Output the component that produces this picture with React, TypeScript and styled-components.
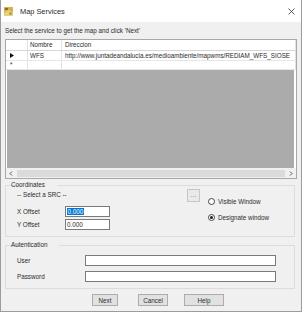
import React from 'react';
import styled, { createGlobalStyle } from 'styled-components';

const GlobalStyle = createGlobalStyle`
  html, body {
    margin: 0;
    padding: 0;
    background: #ffffff;
  }
  body {
    font-family: 'Liberation Sans', Arial, sans-serif;
    color: #2b2b2b;
  }
  * {
    box-sizing: border-box;
  }
`;

const TEXT = '6.3px';

const Window = styled.div`
  width: 302px;
  height: 312px;
  display: flex;
  flex-direction: column;
  background: #f0f0f0;
  border: 1px solid #9c9c9c;
  border-top: none;
  overflow: hidden;
`;

const TitleBar = styled.div`
  height: 22px;
  flex-shrink: 0;
  display: flex;
  align-items: center;
  background: #ffffff;
  padding: 0 6px 0 3px;
`;

const Title = styled.span`
  margin-left: 7px;
  font-size: 7.4px;
  color: #2b2b2b;
  flex: 1;
`;

const Body = styled.div`
  flex: 1;
  display: flex;
  flex-direction: column;
  padding: 0 4px;
`;

const Instruction = styled.div`
  margin-top: 4px;
  height: 10px;
  line-height: 10px;
  font-size: ${TEXT};
`;

const Grid = styled.div`
  margin-top: 3px;
  height: 140px;
  display: flex;
  flex-direction: column;
  border: 1px solid #a8a8a8;
  background: #ffffff;
`;

const GridRow = styled.div<{ $h: number; $header?: boolean }>`
  height: ${p => p.$h}px;
  flex-shrink: 0;
  display: grid;
  grid-template-columns: 22px 34px 1fr;
  border-bottom: 1px solid ${p => (p.$header ? '#d6d6d6' : '#e6e6e6')};
  font-size: ${TEXT};
  line-height: ${p => p.$h - 1}px;
`;

const Cell = styled.div<{ $pad?: number }>`
  border-right: 1px solid #e2e2e2;
  padding-left: ${p => p.$pad ?? 2}px;
  white-space: nowrap;
  overflow: hidden;
  display: flex;
  align-items: center;
`;

const Empty = styled.div`
  flex: 1;
  background: #ababab;
  margin: 0 2px 0 1px;
`;

const ScrollBar = styled.div`
  height: 10px;
  flex-shrink: 0;
  display: flex;
  align-items: center;
  background: #f0f0f0;
`;

const ScrollArrow = styled.div`
  width: 10px;
  height: 10px;
  display: flex;
  align-items: center;
  justify-content: center;
`;

const Thumb = styled.div`
  flex: 1;
  height: 7px;
  background: #dadada;
  margin: 0 1px;
`;

const Group = styled.fieldset<{ $top: number; $bottom: number }>`
  margin: ${p => p.$top}px 2px 0 0;
  padding: 0 0 ${p => p.$bottom}px 11px;
  border: 1px solid #dcdcdc;
  min-width: 0;
`;

const Legend = styled.legend`
  font-size: ${TEXT};
  line-height: 8px;
  padding: 0 1px;
  margin-left: 4px;
  position: relative;
  left: -11px;
`;

const CoordRow = styled.div`
  display: flex;
  align-items: flex-start;
`;

const LeftCol = styled.div`
  width: 93px;
  display: flex;
  flex-direction: column;
`;

const Note = styled.div`
  margin-top: 2px;
  height: 8px;
  line-height: 8px;
  font-size: ${TEXT};
`;

const FieldRow = styled.div<{ $top: number; $label: number; $right?: number }>`
  margin-top: ${p => p.$top}px;
  padding-right: ${p => p.$right ?? 0}px;
  display: grid;
  grid-template-columns: ${p => p.$label}px 1fr;
  align-items: center;
  font-size: ${TEXT};
`;

const Input = styled.div<{ $w?: number }>`
  height: 11px;
  width: ${p => (p.$w ? `${p.$w}px` : 'auto')};
  background: #ffffff;
  border: 1px solid #7a7a7a;
  font-size: ${TEXT};
  line-height: 9px;
  padding-left: 1px;
  display: flex;
  align-items: center;
`;

const Selected = styled.span`
  background: #0078d7;
  color: #ffffff;
  line-height: 7px;
  padding: 0 0.5px;
`;

const DotsButton = styled.div`
  margin-left: 77px;
  width: 13px;
  height: 13px;
  border: 1px solid #c6c6c6;
  background: #e9e9e9;
  color: #8c8c8c;
  font-size: 7px;
  line-height: 7px;
  display: flex;
  align-items: center;
  justify-content: center;
  padding-bottom: 2px;
`;

const RadioCol = styled.div`
  margin-left: 8px;
  margin-top: 7px;
  display: flex;
  flex-direction: column;
  gap: 6px;
`;

const RadioItem = styled.div`
  height: 10px;
  display: flex;
  align-items: center;
  gap: 3px;
  font-size: ${TEXT};
`;

const RadioCircle = styled.span<{ $on?: boolean }>`
  width: 7px;
  height: 7px;
  border-radius: 50%;
  border: 1px solid #444;
  background: #fff;
  display: flex;
  align-items: center;
  justify-content: center;

  &::after {
    content: '';
    width: 3px;
    height: 3px;
    border-radius: 50%;
    background: ${p => (p.$on ? '#1a1a1a' : 'transparent')};
  }
`;

const Buttons = styled.div`
  margin-top: 5px;
  padding-left: 87px;
  display: flex;
`;

const Button = styled.div<{ $w: number; $gap: number }>`
  width: ${p => p.$w}px;
  height: 12px;
  margin-left: ${p => p.$gap}px;
  background: #e1e1e1;
  border: 1px solid #adadad;
  font-size: ${TEXT};
  display: flex;
  align-items: center;
  justify-content: center;
`;

const MapIcon = () => (
  <svg width="9" height="9" viewBox="0 0 9 9">
    <rect x="0" y="0" width="9" height="9" fill="#d8b04c" />
    <path d="M0 6 L4 3 L9 5 L9 9 L0 9 Z" fill="#e9cf7e" />
    <rect x="1" y="1" width="3" height="2" fill="#8b6d2a" />
    <rect x="5.5" y="5.5" width="2" height="2" fill="#6b8f3a" />
  </svg>
);

const CloseIcon = () => (
  <svg width="7" height="7" viewBox="0 0 7 7">
    <path d="M0.5 0.5 L6.5 6.5 M6.5 0.5 L0.5 6.5" stroke="#333" strokeWidth="0.8" />
  </svg>
);

const Chevron = ({ dir }: { dir: 'left' | 'right' }) => (
  <svg width="4" height="5" viewBox="0 0 4 5">
    <path
      d={dir === 'left' ? 'M3 0.5 L1 2.5 L3 4.5' : 'M1 0.5 L3 2.5 L1 4.5'}
      stroke="#555"
      strokeWidth="1"
      fill="none"
    />
  </svg>
);

const RowArrow = () => (
  <svg width="4" height="5" viewBox="0 0 4 5">
    <path d="M0 0 L4 2.5 L0 5 Z" fill="#111" />
  </svg>
);

const App: React.FC = () => {
  return (
    <>
      <GlobalStyle />
      <Window>
        <TitleBar>
          <MapIcon />
          <Title>Map Services</Title>
          <CloseIcon />
        </TitleBar>
        <Body>
          <Instruction>Select the service to get the map and click 'Next'</Instruction>
          <Grid>
            <GridRow $h={11} $header>
              <Cell />
              <Cell>Nombre</Cell>
              <Cell $pad={3}>Direccion</Cell>
            </GridRow>
            <GridRow $h={10}>
              <Cell $pad={4}>
                <RowArrow />
              </Cell>
              <Cell>WFS</Cell>
              <Cell $pad={3}>
                http://www.juntadeandalucia.es/medioambiente/mapwms/REDIAM_WFS_SIOSE
              </Cell>
            </GridRow>
            <GridRow $h={9}>
              <Cell $pad={4}>*</Cell>
              <Cell />
              <Cell />
            </GridRow>
            <Empty />
            <ScrollBar>
              <ScrollArrow>
                <Chevron dir="left" />
              </ScrollArrow>
              <Thumb />
              <ScrollArrow>
                <Chevron dir="right" />
              </ScrollArrow>
            </ScrollBar>
          </Grid>

          <Group $top={2} $bottom={6}>
            <Legend>Coordinates</Legend>
            <CoordRow>
              <LeftCol>
                <Note>-- Select a SRC --</Note>
                <FieldRow $top={7} $label={48}>
                  <span>X Offset</span>
                  <Input $w={45}>
                    <Selected>0.000</Selected>
                  </Input>
                </FieldRow>
                <FieldRow $top={2} $label={48}>
                  <span>Y Offset</span>
                  <Input $w={45}>0.000</Input>
                </FieldRow>
              </LeftCol>
              <DotsButton>...</DotsButton>
              <RadioCol>
                <RadioItem>
                  <RadioCircle />
                  Visible Window
                </RadioItem>
                <RadioItem>
                  <RadioCircle $on />
                  Designate window
                </RadioItem>
              </RadioCol>
            </CoordRow>
          </Group>

          <Group $top={4} $bottom={6}>
            <Legend>Autentication</Legend>
            <FieldRow $top={6} $label={68} $right={18}>
              <span>User</span>
              <Input />
            </FieldRow>
            <FieldRow $top={5} $label={68} $right={18}>
              <span>Password</span>
              <Input />
            </FieldRow>
          </Group>

          <Buttons>
            <Button $w={26} $gap={0}>Next</Button>
            <Button $w={30} $gap={20}>Cancel</Button>
            <Button $w={40} $gap={16}>Help</Button>
          </Buttons>
        </Body>
      </Window>
    </>
  );
};

export default App;
